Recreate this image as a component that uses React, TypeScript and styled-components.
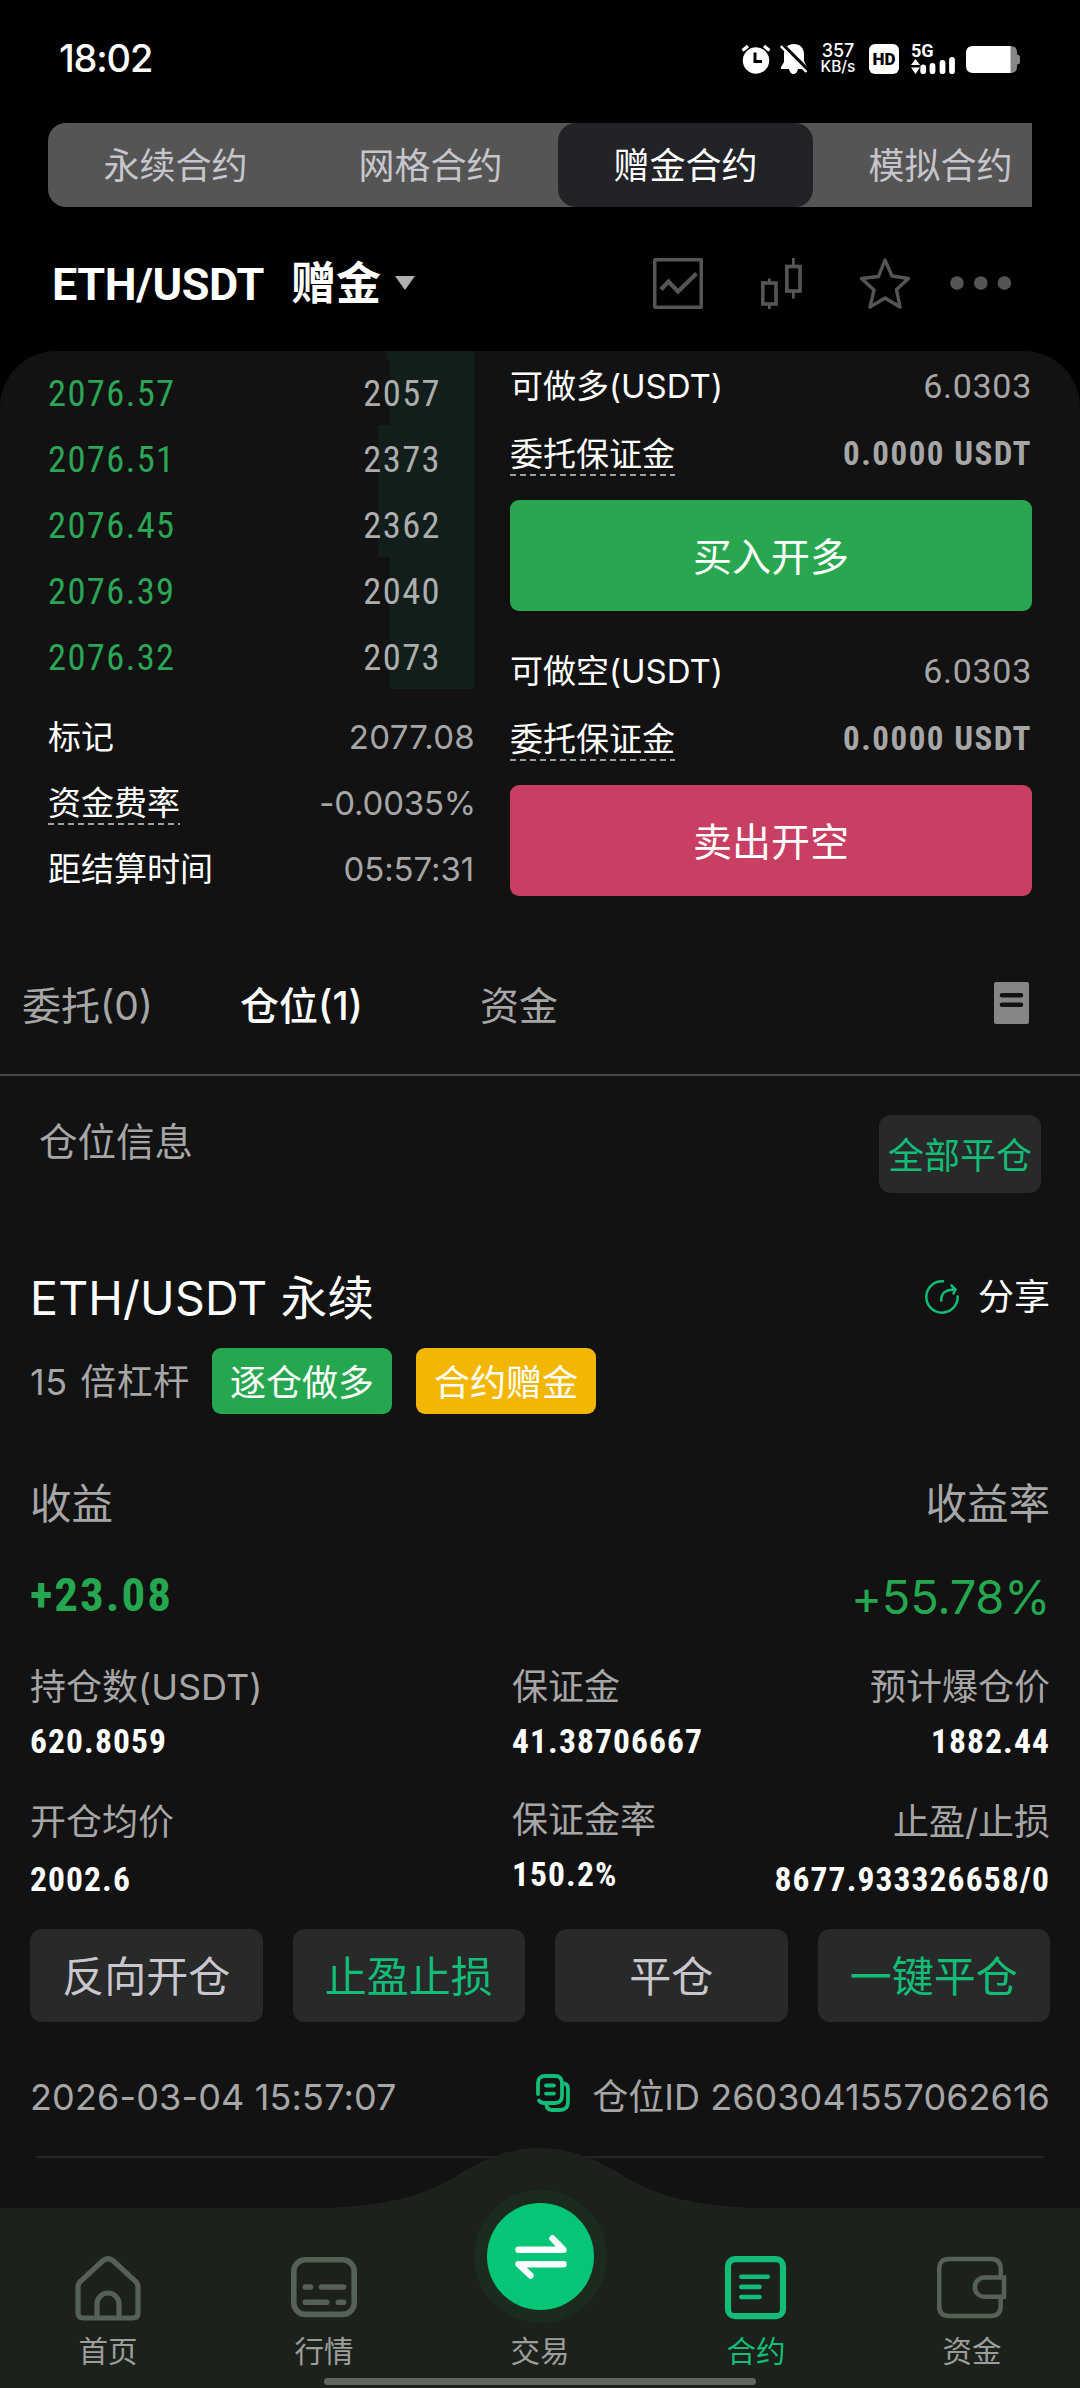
import React from 'react';
import styled, { createGlobalStyle } from 'styled-components';

const GREEN = '#25a750';
const MINT = '#13bd77';
const GRAY = '#a6a6a6';

const sans = `Inter, "Noto Sans CJK SC", sans-serif`;
const din = `"Roboto Condensed", Roboto, "Noto Sans CJK SC", sans-serif`;

const GlobalStyle = createGlobalStyle`
  * { box-sizing: border-box; }
  body { margin: 0; background: #000; font-family: ${sans}; line-height: 1.3; }
  svg { display: block; flex: none; }
`;

const Page = styled.div`
  width: 1080px;
  height: 2388px;
  display: flex;
  flex-direction: column;
  background: #000;
  color: #fff;
  overflow: hidden;
  white-space: nowrap;
`;

/* ---------- status bar ---------- */

const StatusBar = styled.header`
  height: 123px;
  padding: 0 60px 5px 59px;
  display: flex;
  align-items: center;
  justify-content: space-between;
`;

const Clock = styled.time`
  font-size: 38px;
  font-weight: 500;
  letter-spacing: -1.2px;
`;

const StatusIcons = styled.div`
  display: flex;
  align-items: center;
`;

const NetSpeed = styled.div`
  display: flex;
  flex-direction: column;
  align-items: center;
  width: 36px;
  margin: 0 13px 0 12px;
  font-weight: 500;
  font-size: 18px;
  line-height: 16px;
`;

const SpeedUnit = styled.span`
  font-size: 15.5px;
`;

/* ---------- product switch ---------- */

const Segment = styled.nav`
  height: 84px;
  margin: 0 48px;
  display: flex;
  background: #555;
  border-radius: 18px 0 0 18px;
  overflow: hidden;
`;

const SegmentItem = styled.button<{ $active?: boolean }>`
  flex: 0 0 255px;
  border: 0;
  padding: 3px 0 0;
  border-radius: 18px;
  background: ${(p) => (p.$active ? '#222327' : 'transparent')};
  color: ${(p) => (p.$active ? '#fff' : '#c6c5cb')};
  font: 400 36px/1.3 ${sans};
`;

/* ---------- pair header ---------- */

const PairHeader = styled.section`
  height: 144px;
  padding: 8px 68px 0 52px;
  display: flex;
  align-items: center;
`;

const PairName = styled.h1`
  flex: 1;
  margin: 4px 0 0;
  display: flex;
  align-items: center;
  font: 700 45px/1.2 Roboto, "Noto Sans CJK SC", sans-serif;
  letter-spacing: -0.4px;
`;

const PairTag = styled.span`
  margin: 0 14px 0 27px;
  letter-spacing: 0;
`;

const Caret = styled.i`
  margin-bottom: 5px;
  border: 10px solid transparent;
  border-top: 14px solid #b0b0b0;
  border-bottom: 0;
`;

const HeaderIcons = styled.div`
  display: flex;
  align-items: center;
  gap: 58px;
`;

const MoreButton = styled.span`
  margin-left: -18px;
`;

/* ---------- trading panel ---------- */

const Panel = styled.main`
  flex: 1;
  display: flex;
  flex-direction: column;
  background: #121212;
  border-radius: 56px 56px 0 0;
  overflow: hidden;
`;

const Trade = styled.section`
  height: 551px;
  padding: 0 48px;
  display: grid;
  grid-template-columns: 426px 522px;
  column-gap: 36px;
`;

const Book = styled.div`
  display: flex;
  flex-direction: column;
`;

const BookRow = styled.div<{ $clipped?: boolean }>`
  position: relative;
  height: ${(p) => (p.$clipped ? 8 : 66)}px;
  padding: 3px 33px 0 0;
  display: flex;
  align-items: center;
  justify-content: space-between;
  font: 400 36.5px/1.2 ${din};
  letter-spacing: 1.4px;
`;

const DepthBar = styled.div`
  position: absolute;
  top: 0;
  right: 0;
  bottom: 0;
  background: #111e1b;
`;

const Price = styled.span`
  position: relative;
  color: #2ba556;
`;

const Amount = styled.span`
  position: relative;
  color: #adadad;
`;

const Marks = styled.div`
  margin-top: 15px;
`;

const MarkRow = styled.div`
  height: 66px;
  display: flex;
  align-items: center;
  justify-content: space-between;
  color: ${GRAY};
  font-size: 33px;
`;

const MarkValue = styled.span<{ $spacing: number; $shift?: number }>`
  letter-spacing: ${(p) => p.$spacing}px;
  margin-right: ${(p) => -(p.$shift || 0)}px;
`;

const Label = styled.span<{ $dashed?: boolean }>`
  color: #fff;
  font-size: 33px;
  line-height: 43px;
  background: ${(p) =>
    p.$dashed
      ? 'repeating-linear-gradient(90deg, #a0a0a0 0 6px, transparent 6px 10px) 0 100% / 100% 2px no-repeat'
      : 'none'};
`;

const OrderForm = styled.div`
  padding-top: 1px;
  display: flex;
  flex-direction: column;
  gap: 26px;
`;

const OrderSide = styled.div`
  display: flex;
  flex-direction: column;
`;

const OrderRow = styled.div`
  height: 68px;
  display: flex;
  align-items: center;
  justify-content: space-between;
`;

const Available = styled.span`
  color: ${GRAY};
  font: 400 34px/1.2 Roboto, sans-serif;
  letter-spacing: 0.7px;
`;

const Margin = styled.span`
  color: ${GRAY};
  font: 700 33px/1.2 ${din};
  letter-spacing: 1.5px;
`;

const OrderButton = styled.button<{ $color: string }>`
  height: 111px;
  margin-top: 12px;
  padding: 3px 0 0;
  border: 0;
  border-radius: 9px;
  background: ${(p) => p.$color};
  color: #fff;
  font: 400 39px/1.3 ${sans};
`;

/* ---------- tabs ---------- */

const Tabs = styled.nav`
  height: 174px;
  padding: 37px 51px 0 22px;
  display: flex;
  align-items: center;
  border-bottom: 2px solid #484848;
`;

const Tab = styled.a<{ $width: number; $active?: boolean }>`
  width: ${(p) => p.$width}px;
  font-size: 39px;
  font-weight: ${(p) => (p.$active ? 500 : 400)};
  color: ${(p) => (p.$active ? '#fff' : GRAY)};
`;

const TabIcon = styled.span`
  margin: 0 0 7px auto;
`;

/* ---------- positions ---------- */

const PositionsHead = styled.div`
  padding: 39px 39px 0 39px;
  display: flex;
  justify-content: space-between;
  align-items: flex-start;
`;

const SectionTitle = styled.h2`
  margin: 0;
  font-size: 38.5px;
  font-weight: 400;
  line-height: 55px;
  color: ${GRAY};
`;

const CloseAll = styled.button`
  width: 162px;
  height: 78px;
  padding: 5px 0 0;
  border: 0;
  border-radius: 12px;
  background: #282929;
  color: ${MINT};
  font: 400 36px/1.3 ${sans};
`;

const Position = styled.article`
  padding: 65px 30px 0;
  display: flex;
  flex-direction: column;
`;

const Line = styled.div<{ $height: number; $top?: number }>`
  height: ${(p) => p.$height}px;
  margin-top: ${(p) => p.$top || 0}px;
  display: flex;
  align-items: center;
  justify-content: space-between;
`;

const PositionName = styled.h3`
  margin: 0;
  font-size: 46.5px;
  font-weight: 400;
  letter-spacing: 0.2px;
`;

const Share = styled.a`
  margin-top: -2px;
  display: flex;
  align-items: center;
  gap: 19px;
  font-size: 36px;
`;

const TagLine = styled.div`
  height: 66px;
  margin-top: 10px;
  display: flex;
  align-items: center;
`;

const Leverage = styled.span`
  width: 182px;
  padding-top: 2px;
  color: ${GRAY};
  font-size: 36px;
  letter-spacing: 0.5px;
  word-spacing: 2px;
`;

const Tag = styled.span<{ $color: string }>`
  width: 180px;
  height: 66px;
  margin-right: 24px;
  border-radius: 9px;
  background: ${(p) => p.$color};
  font-size: 36px;
  line-height: 70px;
  text-align: center;
`;

const Caption = styled.span`
  color: ${GRAY};
  font-size: 41.5px;
`;

const Profit = styled.span`
  color: ${GREEN};
  font: 700 47px/1.2 ${din};
  letter-spacing: 2px;
`;

const ProfitRate = styled.span`
  margin-top: 4px;
  color: ${GREEN};
  font-size: 47px;
  line-height: 1.2;
  letter-spacing: -0.3px;
`;

const Stats = styled.dl<{ $top: number; $gap: number }>`
  margin: ${(p) => p.$top}px 0 0;
  display: grid;
  grid-template-columns: 482px 240px 1fr;
  --gap: ${(p) => p.$gap}px;
`;

const Stat = styled.div<{ $end?: boolean; $tight?: boolean }>`
  display: flex;
  flex-direction: column;
  align-items: ${(p) => (p.$end ? 'flex-end' : 'flex-start')};
  gap: ${(p) => (p.$tight ? '4px' : 'var(--gap)')};
  margin-top: ${(p) => (p.$tight ? -2 : 0)}px;
`;

const StatName = styled.dt`
  height: 50px;
  line-height: 51px;
  font-size: 36px;
  color: ${GRAY};
`;

const StatValue = styled.dd`
  margin: 0;
  height: 50px;
  font: 700 33.5px / 51px ${din};
  letter-spacing: 1.1px;
`;

const Actions = styled.div`
  margin-top: 25px;
  display: grid;
  grid-template-columns: repeat(4, 1fr);
  gap: 30px;
`;

const ActionButton = styled.button<{ $accent?: boolean }>`
  height: 93px;
  padding: 4px 0 0;
  border: 0;
  border-radius: 12px;
  background: #282929;
  color: ${(p) => (p.$accent ? MINT : '#c8c7cd')};
  font: 400 42px/1.3 ${sans};
`;

const Meta = styled.span<{ $spacing: number }>`
  padding-top: 2px;
  display: flex;
  align-items: center;
  color: ${GRAY};
  font-size: 36px;
  letter-spacing: ${(p) => p.$spacing}px;
`;

const CopyButton = styled.a`
  margin: 0 22px 7px 0;
`;

const Divider = styled.hr`
  width: 1008px;
  height: 2px;
  margin: 30px auto 0;
  border: 0;
  background: #242525;
`;

/* ---------- bottom navigation ---------- */

const BottomNav = styled.nav`
  position: relative;
  height: 240px;
  margin-top: -10px;
  display: flex;
`;

const NavShape = styled.svg`
  position: absolute;
  inset: 0;
`;

const NavItem = styled.a<{ $active?: boolean }>`
  position: relative;
  flex: 1;
  padding-bottom: 19px;
  display: flex;
  flex-direction: column;
  align-items: center;
  justify-content: flex-end;
  gap: 12px;
  color: ${(p) => (p.$active ? MINT : '#566156')};
`;

const NavLabel = styled.span<{ $active?: boolean }>`
  height: 36px;
  font-size: 29.5px;
  font-weight: 400;
  line-height: 36px;
  color: ${(p) => (p.$active ? MINT : '#9b9e9a')};
`;

const TradeButton = styled.span`
  position: absolute;
  top: 55px;
  left: 55px;
  width: 107px;
  height: 107px;
  border-radius: 50%;
  background: #05c577;
  box-shadow: 0 0 0 13px #1b2b1e;
  display: flex;
  align-items: center;
  justify-content: center;
`;

const HomeIndicator = styled.i`
  position: absolute;
  left: 324px;
  bottom: 3px;
  width: 432px;
  height: 7px;
  border-radius: 4px;
  background: #62665f;
`;

/* ---------- icons ---------- */

const AlarmIcon = () => (
  <svg width="30" height="30" viewBox="0 0 30 30">
    <circle cx="15" cy="16.5" r="13.2" fill="#fff" />
    <path d="M1.5 6.5 L7 2 M28.5 6.5 L23 2" stroke="#fff" strokeWidth="3.2" />
    <path d="M14 8.5 V17.5 H21" stroke="#000" strokeWidth="3" fill="none" />
  </svg>
);

const BellOffIcon = () => (
  <svg width="28" height="30" viewBox="0 0 28 30" style={{ marginLeft: 9 }}>
    <path
      d="M14 0 C20 0 24 4 24 10 V17 L27 23 V25 H18 Q17 30 13.5 30 Q10 30 9 25 H1 V23 L4 18 V10 C4 4 8 0 14 0Z"
      fill="#fff"
    />
    <path d="M2 1 L28 27" stroke="#000" strokeWidth="5" />
    <path d="M0.8 2.2 L26.5 28" stroke="#fff" strokeWidth="2.4" />
  </svg>
);

const HdBadge = styled.span`
  width: 30px;
  height: 30px;
  margin-right: 12px;
  border-radius: 6px;
  background: #fff;
  color: #000;
  font: 900 17px/31px Roboto, sans-serif;
  text-align: center;
`;

const Signal = styled.span`
  width: 45px;
  height: 30px;
  margin-right: 10px;
  display: flex;
  flex-direction: column;
  font: 700 18px/13px Roboto, sans-serif;
`;

const SignalIcon = () => (
  <svg width="45" height="17" viewBox="0 0 45 17">
    <path d="M0 8 L4.5 2 L9 8Z M0 10.5 L4.5 17 L9 10.5Z" fill="#fff" />
    <path d="M12.2 10.5 V14.2 M21.5 9 V14.2 M31.5 6 V14.2 M41 3 V14.2" stroke="#fff" strokeWidth="5.8" strokeLinecap="round" />
  </svg>
);

const BatteryIcon = () => (
  <svg width="54" height="27" viewBox="0 0 54 27">
    <path d="M44 0 Q51 0 51 6 V8.5 Q54 9 54 11 V16 Q54 18 51 18.5 V21 Q51 27 44 27Z" fill="#888" />
    <path d="M7 0 H44.5 V27 H7 Q0 27 0 20 V7 Q0 0 7 0Z" fill="#fff" />
  </svg>
);

const ChartIcon = () => (
  <svg width="50" height="51" viewBox="0 0 50 51" fill="none" stroke="#555">
    <rect x="1.7" y="1.7" width="46.6" height="47.6" rx="1" strokeWidth="3.6" />
    <path d="M8 31.5 L15.5 23.5 L25 33.5 L43.5 15.5" strokeWidth="4.2" />
  </svg>
);

const CandlesIcon = () => (
  <svg width="41" height="51" viewBox="0 0 41 51" fill="none" stroke="#555" strokeWidth="3.6">
    <rect x="1.8" y="25" width="13.2" height="21" />
    <rect x="25.8" y="8.5" width="13.2" height="24.5" />
    <path d="M8.4 20.5 V25 M8.4 46 V51 M32.4 0 V8 M32.4 33 V40.5" strokeWidth="2.8" />
  </svg>
);

const StarIcon = () => (
  <svg width="50" height="51" viewBox="0 0 50 51" fill="none" stroke="#555" strokeWidth="3.4" strokeLinejoin="round">
    <path d="M25 2 L32 18 L48.5 20.5 L36.5 31.5 L40 49 L25 40 L10 49 L14 32 L1.5 20.5 L18.5 18.5 Z" />
  </svg>
);

const DotsIcon = () => (
  <svg width="62" height="14" viewBox="0 0 62 14" fill="#555">
    <circle cx="7" cy="7" r="6.8" />
    <circle cx="30.8" cy="7" r="6.8" />
    <circle cx="54.4" cy="7" r="6.8" />
  </svg>
);

const ListIcon = () => (
  <svg width="35" height="42" viewBox="0 0 35 42">
    <rect width="35" height="42" rx="2" fill="#868686" />
    <path d="M8 13.2 H27 M8 22.8 H27" stroke="#121212" strokeWidth="4.6" strokeLinecap="round" />
  </svg>
);

const ShareIcon = () => (
  <svg width="34" height="34" viewBox="0 0 34 34" fill="none" stroke={MINT} strokeWidth="2.5" strokeLinecap="round">
    <path d="M18 1.3 A15.7 15.7 0 1 0 32.7 16.5" />
    <path d="M16.3 20.5 C16 13.5 20 9.5 30 9.5 M26.5 5.5 L30.5 9.5 L28.5 13.5" />
  </svg>
);

const CopyIcon = () => (
  <svg width="34" height="38" viewBox="0 0 34 38" fill="none" stroke={MINT} strokeWidth="3.8" strokeLinecap="round">
    <path d="M2 20 V9 Q2 2 9 2 H19 Q26 2 26 9 V22 Q26 29 19 29 H8 Q5 29 3 26.5" />
    <path d="M28 9.5 Q32 10 32 15 V28 Q32 36 24 36 H16 Q11.5 36 10.5 31.5" />
    <path d="M10 11.5 H18 M10 19.6 H18" />
  </svg>
);

const HomeIcon = () => (
  <svg width="66" height="66" viewBox="0 0 66 66" fill="none" stroke="currentColor" strokeWidth="5.2">
    <path d="M3 32 Q3 28.5 5.5 26.3 L27.5 6 Q33 1.5 38.5 6 L60.5 26.3 Q63 28.5 63 32 V58 Q63 63 58 63 H8 Q3 63 3 58 Z" />
    <path d="M22 63 V49 A11 11 0 0 1 44 49 V63" />
  </svg>
);

const MarketIcon = () => (
  <svg width="66" height="66" viewBox="0 0 66 66" fill="none" stroke="currentColor" strokeWidth="5.6" strokeLinecap="round">
    <rect x="2.8" y="4.8" width="60.4" height="54.6" rx="11.5" />
    <path d="M14.3 32 H19.5 M30.5 32 H52.5 M14.3 47.2 H35.7 M47.3 47.2 H52.5" />
  </svg>
);

const ContractIcon = () => (
  <svg width="66" height="66" viewBox="0 0 66 66" fill="none" stroke="currentColor" strokeLinecap="round">
    <rect x="5" y="4.2" width="55" height="57" rx="7" strokeWidth="6.2" />
    <path d="M18.3 21.7 H44.7 M18.3 31.9 H36.5 M18.3 42 H36.5" strokeWidth="4.6" />
  </svg>
);

const WalletIcon = () => (
  <svg width="70" height="66" viewBox="0 0 70 66" fill="none" stroke="currentColor" strokeWidth="4.5">
    <path d="M63.7 21 V14 Q63.7 4 53.7 4 H12 Q2.2 4 2.2 14 V51 Q2.2 61 12 61 H53.7 Q63.7 61 63.7 51 V43" />
    <path d="M67 22.5 H47.5 A9.6 9.6 0 0 0 47.5 41.8 H67 Z" />
  </svg>
);

const SwapIcon = () => (
  <svg width="54" height="48" viewBox="0 0 54 48" fill="none" stroke="#fff" strokeWidth="6.4" strokeLinecap="round" strokeLinejoin="round">
    <path d="M4.5 16.8 H49.5 L38.5 5.5" />
    <path d="M49.5 31.2 H4.5 L16.5 42.5" />
  </svg>
);

/* ---------- data ---------- */

const bids = [
  { price: '2076.57', amount: '2057', depth: 84 },
  { price: '2076.51', amount: '2373', depth: 96 },
  { price: '2076.45', amount: '2362', depth: 96 },
  { price: '2076.39', amount: '2040', depth: 84 },
  { price: '2076.32', amount: '2073', depth: 84 },
];

const sides = [
  { name: '可做多(USDT)', action: '买入开多', color: '#28a750' },
  { name: '可做空(USDT)', action: '卖出开空', color: '#c93f64' },
];

export default function App() {
  return (
    <>
      <GlobalStyle />
      <Page>
        <StatusBar>
          <Clock>18:02</Clock>
          <StatusIcons>
            <AlarmIcon />
            <BellOffIcon />
            <NetSpeed>
              357
              <SpeedUnit>KB/s</SpeedUnit>
            </NetSpeed>
            <HdBadge>HD</HdBadge>
            <Signal>
              5G
              <SignalIcon />
            </Signal>
            <BatteryIcon />
          </StatusIcons>
        </StatusBar>

        <Segment>
          <SegmentItem>永续合约</SegmentItem>
          <SegmentItem>网格合约</SegmentItem>
          <SegmentItem $active>赠金合约</SegmentItem>
          <SegmentItem>模拟合约</SegmentItem>
        </Segment>

        <PairHeader>
          <PairName>
            ETH/USDT
            <PairTag>赠金</PairTag>
            <Caret />
          </PairName>
          <HeaderIcons>
            <ChartIcon />
            <CandlesIcon />
            <StarIcon />
            <MoreButton>
              <DotsIcon />
            </MoreButton>
          </HeaderIcons>
        </PairHeader>

        <Panel>
          <Trade>
            <Book>
              <BookRow $clipped>
                <DepthBar style={{ width: 88 }} />
              </BookRow>
              {bids.map((b) => (
                <BookRow key={b.price}>
                  <DepthBar style={{ width: b.depth }} />
                  <Price>{b.price}</Price>
                  <Amount>{b.amount}</Amount>
                </BookRow>
              ))}
              <Marks>
                <MarkRow>
                  <Label>标记</Label>
                  <MarkValue $spacing={0.3} $shift={1}>2077.08</MarkValue>
                </MarkRow>
                <MarkRow>
                  <Label $dashed>资金费率</Label>
                  <MarkValue $spacing={-0.2} $shift={2}>-0.0035%</MarkValue>
                </MarkRow>
                <MarkRow>
                  <Label>距结算时间</Label>
                  <MarkValue $spacing={-0.1}>05:57:31</MarkValue>
                </MarkRow>
              </Marks>
            </Book>
            <OrderForm>
              {sides.map((s) => (
                <OrderSide key={s.name}>
                  <OrderRow>
                    <Label>{s.name}</Label>
                    <Available>6.0303</Available>
                  </OrderRow>
                  <OrderRow>
                    <Label $dashed>委托保证金</Label>
                    <Margin>0.0000 USDT</Margin>
                  </OrderRow>
                  <OrderButton $color={s.color}>{s.action}</OrderButton>
                </OrderSide>
              ))}
            </OrderForm>
          </Trade>

          <Tabs>
            <Tab $width={218}>委托(0)</Tab>
            <Tab $width={240} $active>仓位(1)</Tab>
            <Tab $width={120}>资金</Tab>
            <TabIcon>
              <ListIcon />
            </TabIcon>
          </Tabs>

          <PositionsHead>
            <SectionTitle>仓位信息</SectionTitle>
            <CloseAll>全部平仓</CloseAll>
          </PositionsHead>

          <Position>
            <Line $height={80}>
              <PositionName>ETH/USDT 永续</PositionName>
              <Share>
                <ShareIcon />
                分享
              </Share>
            </Line>
            <TagLine>
              <Leverage>15 倍杠杆</Leverage>
              <Tag $color={GREEN}>逐仓做多</Tag>
              <Tag $color="#f2b705">合约赠金</Tag>
            </TagLine>
            <Line $height={60} $top={61}>
              <Caption>收益</Caption>
              <Caption>收益率</Caption>
            </Line>
            <Line $height={64} $top={28}>
              <Profit>+23.08</Profit>
              <ProfitRate>+55.78%</ProfitRate>
            </Line>

            <Stats $top={35} $gap={4}>
              <Stat>
                <StatName>持仓数(USDT)</StatName>
                <StatValue>620.8059</StatValue>
              </Stat>
              <Stat>
                <StatName>保证金</StatName>
                <StatValue>41.38706667</StatValue>
              </Stat>
              <Stat $end>
                <StatName>预计爆仓价</StatName>
                <StatValue>1882.44</StatValue>
              </Stat>
            </Stats>
            <Stats $top={31} $gap={7}>
              <Stat>
                <StatName>开仓均价</StatName>
                <StatValue>2002.6</StatValue>
              </Stat>
              <Stat $tight>
                <StatName>保证金率</StatName>
                <StatValue>150.2%</StatValue>
              </Stat>
              <Stat $end>
                <StatName>止盈/止损</StatName>
                <StatValue>8677.933326658/0</StatValue>
              </Stat>
            </Stats>

            <Actions>
              <ActionButton>反向开仓</ActionButton>
              <ActionButton $accent>止盈止损</ActionButton>
              <ActionButton>平仓</ActionButton>
              <ActionButton $accent>一键平仓</ActionButton>
            </Actions>

            <Line $height={60} $top={44}>
              <Meta $spacing={0.15}>2026-03-04 15:57:07</Meta>
              <Meta $spacing={0.05}>
                <CopyButton>
                  <CopyIcon />
                </CopyButton>
                仓位ID 2603041557062616
              </Meta>
            </Line>
          </Position>
          <Divider />

          <BottomNav>
            <NavShape width="1080" height="240" viewBox="0 0 1080 240">
              <path
                d="M0 60 H325 C385 58 425 48 461 25 C490 8 512 0 540 0 C568 0 590 8 619 25 C655 48 695 58 755 60 H1080 V240 H0Z"
                fill="#1d211c"
              />
            </NavShape>
            <NavItem>
              <HomeIcon />
              <NavLabel>首页</NavLabel>
            </NavItem>
            <NavItem>
              <MarketIcon />
              <NavLabel>行情</NavLabel>
            </NavItem>
            <NavItem>
              <TradeButton>
                <SwapIcon />
              </TradeButton>
              <NavLabel>交易</NavLabel>
            </NavItem>
            <NavItem $active>
              <ContractIcon />
              <NavLabel $active>合约</NavLabel>
            </NavItem>
            <NavItem>
              <WalletIcon />
              <NavLabel>资金</NavLabel>
            </NavItem>
            <HomeIndicator />
          </BottomNav>
        </Panel>
      </Page>
    </>
  );
}
